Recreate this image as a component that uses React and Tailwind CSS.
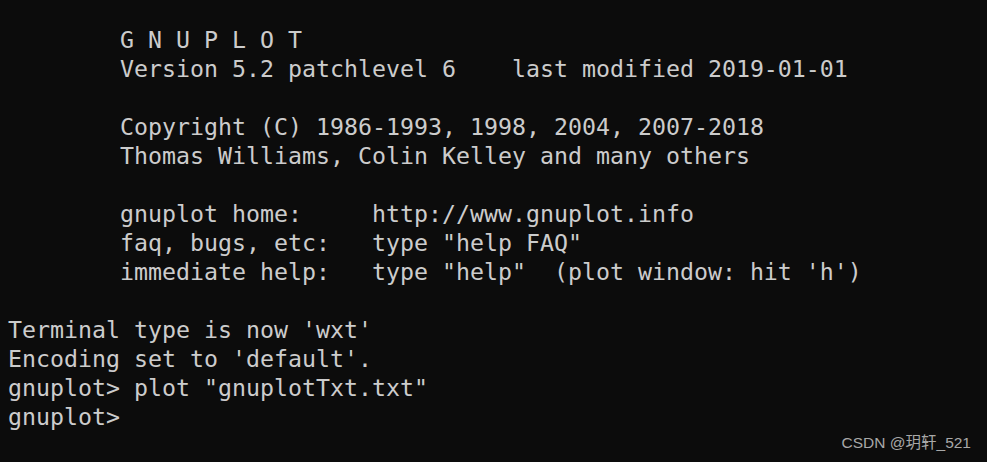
const lines = [
  "        G N U P L O T",
  "        Version 5.2 patchlevel 6    last modified 2019-01-01",
  "",
  "        Copyright (C) 1986-1993, 1998, 2004, 2007-2018",
  "        Thomas Williams, Colin Kelley and many others",
  "",
  "        gnuplot home:     http://www.gnuplot.info",
  "        faq, bugs, etc:   type \"help FAQ\"",
  "        immediate help:   type \"help\"  (plot window: hit 'h')",
  "",
  "Terminal type is now 'wxt'",
  "Encoding set to 'default'.",
  "gnuplot> plot \"gnuplotTxt.txt\"",
  "gnuplot>",
];

export default function App() {
  return (
    <div className="relative w-[987px] h-[462px] bg-[#0c0c0c] overflow-hidden">
      <div className="pl-2 pt-[25px] text-[#cccccc] text-[23.25px] leading-[29px] font-['DejaVu_Sans_Mono',monospace]">
        {lines.map((line, i) => (
          <div key={i} className="whitespace-pre h-[29px]">
            {line}
          </div>
        ))}
      </div>
      <div className="absolute right-4 bottom-[8px] text-[15.5px] text-[#a8a8a8] font-['Liberation_Sans','Noto_Sans_CJK_SC',sans-serif]">
        CSDN @玥轩_521
      </div>
    </div>
  );
}
